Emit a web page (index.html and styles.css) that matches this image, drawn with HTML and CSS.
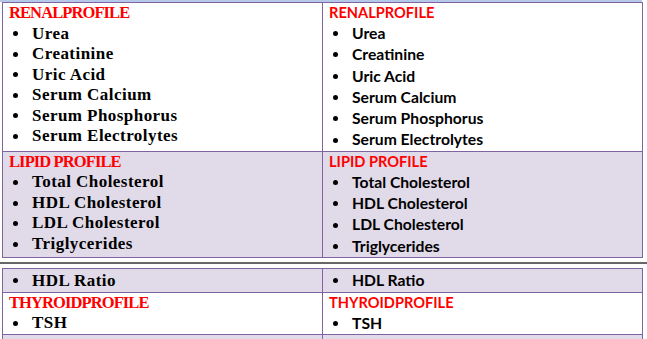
FILE: index.html
```html
<!DOCTYPE html>
<html>
<head>
<meta charset="utf-8">
<link rel="stylesheet" href="styles.css">
</head>
<body>
<div class="topline"></div>
<table class="grid first">
  <tr class="white">
    <td class="serif">
      <div class="h">RENALPROFILE</div>
      <ul>
        <li>Urea</li>
        <li>Creatinine</li>
        <li>Uric Acid</li>
        <li>Serum Calcium</li>
        <li>Serum Phosphorus</li>
        <li>Serum Electrolytes</li>
      </ul>
    </td>
    <td class="sans">
      <div class="h">RENALPROFILE</div>
      <ul>
        <li>Urea</li>
        <li>Creatinine</li>
        <li>Uric Acid</li>
        <li>Serum Calcium</li>
        <li>Serum Phosphorus</li>
        <li>Serum Electrolytes</li>
      </ul>
    </td>
  </tr>
  <tr class="lav">
    <td class="serif">
      <div class="h">LIPID PROFILE</div>
      <ul>
        <li>Total Cholesterol</li>
        <li>HDL Cholesterol</li>
        <li>LDL Cholesterol</li>
        <li>Triglycerides</li>
      </ul>
    </td>
    <td class="sans">
      <div class="h">LIPID PROFILE</div>
      <ul>
        <li>Total Cholesterol</li>
        <li>HDL Cholesterol</li>
        <li>LDL Cholesterol</li>
        <li>Triglycerides</li>
      </ul>
    </td>
  </tr>
</table>
<div class="pagebreak"></div>
<table class="grid second">
  <tr class="lav ratio">
    <td class="serif"><ul><li>HDL Ratio</li></ul></td>
    <td class="sans"><ul><li>HDL Ratio</li></ul></td>
  </tr>
  <tr class="white">
    <td class="serif">
      <div class="h">THYROIDPROFILE</div>
      <ul><li>TSH</li></ul>
    </td>
    <td class="sans">
      <div class="h">THYROIDPROFILE</div>
      <ul><li>TSH</li></ul>
    </td>
  </tr>
  <tr class="lav empty">
    <td></td>
    <td></td>
  </tr>
</table>
</body>
</html>
```

FILE: styles.css
```css
html, body {
  margin: 0;
  padding: 0;
  background: #ffffff;
  overflow: hidden;
}
body {
  width: 647px;
  height: 339px;
}
.topline {
  width: 642px;
  height: 2px;
  background: #b4c8ea;
}
.grid {
  border-collapse: collapse;
  margin-left: 2px;
  width: 641px;
  table-layout: fixed;
}
.grid td {
  border: 1px solid #8064a2;
  padding: 0 0 0 6px;
  vertical-align: top;
  width: 50%;
}
.white td { background: #ffffff; }
.lav td { background: #e0dae9; }
.h {
  color: #ff0000;
  font-weight: bold;
}
ul {
  list-style: none;
  margin: 0;
  padding: 0;
}
li {
  display: flex;
  align-items: center;
  font-weight: bold;
  color: #000;
}
li::before {
  content: "";
  width: 5px;
  height: 5px;
  border-radius: 50%;
  background: #000;
  margin-left: 4px;
  margin-right: 14px;
  flex: none;
}
.serif {
  font-family: "Liberation Serif", serif;
  font-size: 17px;
  line-height: 20.5px;
}
.serif li {
  letter-spacing: 0.45px;
}
.serif .h {
  font-size: 16.5px;
  letter-spacing: -0.9px;
}
.sans {
  font-family: "Lato", sans-serif;
  font-size: 15.7px;
  line-height: 21.3px;
}
.sans .h {
  font-size: 14.6px;
  line-height: 20px;
}
.ratio li {
  line-height: 23px;
}
.empty td {
  height: 10px;
}
.pagebreak {
  height: 2px;
  background: #666666;
  margin: 4px 0 4px 0;
  width: 647px;
}
```
